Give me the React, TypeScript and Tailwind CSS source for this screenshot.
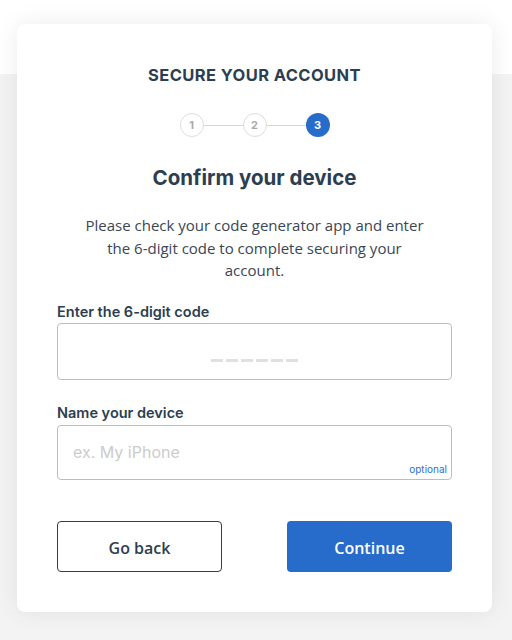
export default function App() {
  const steps = [1, 2, 3];
  return (
    <div className="min-h-[640px] w-[512px] relative bg-[#f3f3f3] font-['Open_Sans',sans-serif]">
      <div className="h-[74px] bg-white" />
      <div className="absolute left-[17px] top-[24px] w-[475px] rounded-lg bg-white shadow-[0_0_24px_rgba(0,0,0,0.08)] px-10 pt-[39px] pb-10">
        <h1 className="text-center font-['Inter',sans-serif] text-[16.5px] font-bold tracking-[0.4px] text-[#2c3e50] leading-6">
          SECURE YOUR ACCOUNT
        </h1>

        <div className="mt-[26px] flex items-center justify-center">
          {steps.map((n, i) => (
            <div key={n} className="flex items-center">
              {i > 0 && <div className="h-px w-[39px] bg-[#d6d6d6]" />}
              <div
                className={`flex h-6 w-6 items-center justify-center rounded-full font-['Inter',sans-serif] text-[11px] font-bold ${
                  n === 3 ? 'bg-[#276bcb] text-white' : 'border border-[#dcdcdc] text-[#a9a9a9]'
                }`}
              >
                {n}
              </div>
            </div>
          ))}
        </div>

        <h2 className="mt-[27px] text-center font-['Inter',sans-serif] text-[20.5px] font-bold text-[#2c3e50] leading-7">
          Confirm your device
        </h2>

        <p className="mx-auto mt-[22px] w-[352px] text-center text-[15px] leading-[22.5px] text-[#3b4654]">
          Please check your code generator app and enter the 6-digit code to complete securing your account.
        </p>

        <div className="mt-[20px]">
          <label className="block font-['Inter',sans-serif] text-[14.5px] font-semibold text-[#2c3e50] leading-5">
            Enter the 6-digit code
          </label>
          <div className="mt-[1px] flex h-[57px] items-end justify-center rounded border border-[#bdbdbd] pb-[17px]">
            <div className="flex gap-[3px]">
              {[0, 1, 2, 3, 4, 5].map((d) => (
                <div key={d} className="h-[3px] w-[12px] bg-[#e0e0e0]" />
              ))}
            </div>
          </div>
        </div>

        <div className="mt-[23px]">
          <label className="block font-['Inter',sans-serif] text-[14.5px] font-semibold text-[#2c3e50] leading-5">
            Name your device
          </label>
          <div className="relative mt-[2px] h-[55px] rounded border border-[#bdbdbd]">
            <input
              placeholder="ex. My iPhone"
              className="h-full w-full bg-transparent px-[15px] text-[16px] font-['Inter',sans-serif] text-[#2c3e50] outline-none placeholder:text-[#cccccc]"
            />
            <span className="absolute bottom-[2px] right-[4px] font-['Inter',sans-serif] text-[10px] text-[#2f6fd0]">
              optional
            </span>
          </div>
        </div>

        <div className="mt-[41px] flex justify-between">
          <button className="h-[51px] w-[165px] rounded border border-[#2c3e50] pt-[3px] text-[16px] font-semibold text-[#2c3e50]">
            Go back
          </button>
          <button className="h-[51px] w-[165px] rounded bg-[#276bcb] pt-[3px] text-[16px] font-semibold text-white">
            Continue
          </button>
        </div>
      </div>
    </div>
  );
}
